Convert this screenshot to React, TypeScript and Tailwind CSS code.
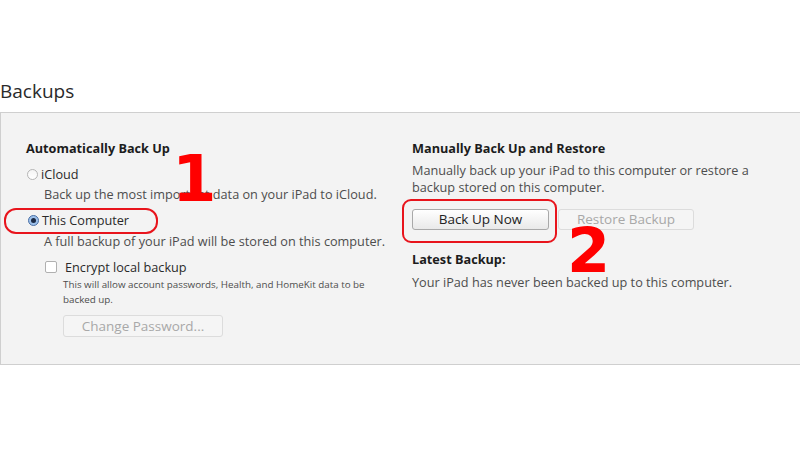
import React from 'react';

const ui = { fontFamily: '"Open Sans", "Noto Sans", sans-serif' };
const mark = { fontFamily: '"DejaVu Sans", sans-serif' };

const Radio = ({ checked }: { checked?: boolean }) =>
  checked ? (
    <span className="flex h-[11px] w-[11px] items-center justify-center rounded-full border border-[#4a6fa5] bg-[#9cc0ea]">
      <span className="h-[5px] w-[5px] rounded-full bg-[#1b2a44]" />
    </span>
  ) : (
    <span className="h-[11px] w-[11px] rounded-full border border-[#b5b5b5] bg-gradient-to-b from-[#f4f4f4] to-[#ffffff]" />
  );

const Button = ({ label, width, disabled }: { label: string; width: string; disabled?: boolean }) => (
  <div
    className={`flex h-[21px] items-center justify-center rounded-[3px] border text-[13.5px] ${width} ${
      disabled
        ? 'border-[#dcdcdc] bg-[#f5f5f5] text-[#a8a8a8]'
        : 'border-[#a9a9a9] bg-gradient-to-b from-[#ffffff] to-[#e9e9e9] text-[#222]'
    }`}
  >
    {label}
  </div>
);

export default function App() {
  return (
    <div className="relative h-[450px] w-[800px] overflow-hidden bg-white text-[#333]" style={ui}>
      <div className="pt-[79px] text-[19px] leading-[24px] text-[#2a2a2a]">Backups</div>

      <div className="mt-[9px] flex h-[253px] border-y border-l border-[#cfcfcf] bg-[#f3f3f3] pt-[26px]">
        {/* left column */}
        <div className="w-[411px] shrink-0 whitespace-nowrap pl-[25px]">
          <div className="text-[12.7px] font-bold leading-[18px] text-[#1c1c1c]">Automatically Back Up</div>

          <div className="mt-[8px] flex items-center gap-[3px] pl-[1px] text-[12.7px] leading-[18px] text-[#2a2a2a]">
            <Radio />
            <span>iCloud</span>
          </div>
          <div className="mt-[2px] pl-[18px] text-[12.7px] leading-[18px] text-[#4d4d4d]">
            Back up the most important data on your iPad to iCloud.
          </div>

          <div className="mt-[8px] flex items-center gap-[3px] pl-[2px] text-[12.7px] leading-[18px] text-[#2a2a2a]">
            <Radio checked />
            <span>This Computer</span>
          </div>
          <div className="mt-[3px] pl-[18px] text-[12.7px] leading-[18px] text-[#4d4d4d]">
            A full backup of your iPad will be stored on this computer.
          </div>

          <div className="mt-[8px] flex items-center gap-[8px] pl-[19px] text-[12.7px] leading-[18px] text-[#2a2a2a]">
            <span className="h-[12px] w-[12px] rounded-[2px] border border-[#b0b0b0] bg-white" />
            <span>Encrypt local backup</span>
          </div>
          <div className="mt-[1px] w-[360px] whitespace-normal pl-[37px] text-[9.8px] leading-[15px] text-[#4d4d4d]">
            This will allow account passwords, Health, and HomeKit data to be backed up.
          </div>

          <div className="mt-[8px] pl-[37px]">
            <Button label="Change Password..." width="w-[160px] h-[22px]" disabled />
          </div>
        </div>

        {/* right column */}
        <div className="flex-1">
          <div className="text-[12.7px] font-bold leading-[18px] text-[#1c1c1c]">Manually Back Up and Restore</div>
          <div className="mt-[5px] w-[345px] text-[12.7px] leading-[17px] text-[#4d4d4d]">
            Manually back up your iPad to this computer or restore a backup stored on this computer.
          </div>
          <div className="mt-[13px] flex gap-[9px]">
            <Button label="Back Up Now" width="w-[137px]" />
            <Button label="Restore Backup" width="w-[136px]" disabled />
          </div>
          <div className="mt-[20px] text-[12.7px] font-bold leading-[18px] text-[#1c1c1c]">Latest Backup:</div>
          <div className="mt-[5px] text-[12.7px] leading-[18px] text-[#4d4d4d]">
            Your iPad has never been backed up to this computer.
          </div>
        </div>
      </div>

      {/* annotations */}
      <div className="absolute left-[4px] top-[208px] h-[26px] w-[154px] rounded-[12px] border-2 border-[#e8141c]" />
      <div className="absolute left-[402px] top-[199px] h-[44px] w-[155px] rounded-[9px] border-2 border-[#e8141c]" />
      <div className="absolute left-[172px] top-[156px] text-[64px] font-bold leading-[46px] text-[#ff0000]" style={mark}>
        1
      </div>
      <div className="absolute left-[567px] top-[229px] text-[62px] font-bold leading-[44px] text-[#ff0000]" style={mark}>
        2
      </div>
    </div>
  );
}
